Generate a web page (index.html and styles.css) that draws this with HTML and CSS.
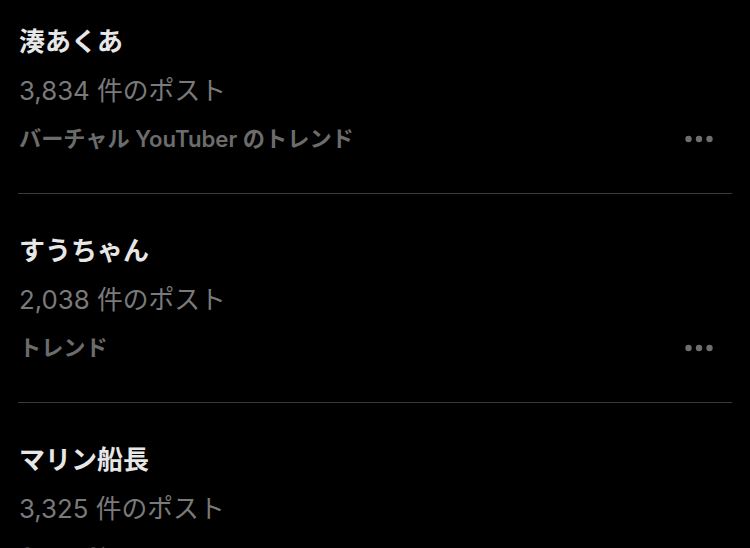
FILE: index.html
```html
<!DOCTYPE html>
<html lang="ja">
<head>
<meta charset="utf-8">
<link rel="stylesheet" href="styles.css">
</head>
<body>
<div class="list">
  <div class="item">
    <div class="title">湊あくあ</div>
    <div class="count">3,834 件のポスト</div>
    <div class="meta">
      <span class="category">バーチャル YouTuber のトレンド</span>
      <svg class="more" width="28" height="8" viewBox="0 0 28 8"><circle cx="3.5" cy="4" r="3.2"/><circle cx="14" cy="4" r="3.2"/><circle cx="24.5" cy="4" r="3.2"/></svg>
    </div>
  </div>
  <div class="item">
    <div class="title">すうちゃん</div>
    <div class="count">2,038 件のポスト</div>
    <div class="meta">
      <span class="category">トレンド</span>
      <svg class="more" width="28" height="8" viewBox="0 0 28 8"><circle cx="3.5" cy="4" r="3.2"/><circle cx="14" cy="4" r="3.2"/><circle cx="24.5" cy="4" r="3.2"/></svg>
    </div>
  </div>
  <div class="item">
    <div class="title">マリン船長</div>
    <div class="count">3,325 件のポスト</div>
    <div class="meta">
      <span class="category">トレンド</span>
      <svg class="more" width="28" height="8" viewBox="0 0 28 8"><circle cx="3.5" cy="4" r="3.2"/><circle cx="14" cy="4" r="3.2"/><circle cx="24.5" cy="4" r="3.2"/></svg>
    </div>
  </div>
</div>
</body>
</html>
```
FILE: styles.css
```css
html, body {
  margin: 0;
  padding: 0;
  background: #000;
  overflow: hidden;
}
body {
  font-family: "Inter", "Noto Sans CJK JP", "Noto Sans", sans-serif;
  width: 750px;
  height: 548px;
}
.list {
  margin-top: -15px;
  display: flex;
  flex-direction: column;
}
.item {
  margin: 0 18px;
  padding: 32px 0 30px 1px;
  border-bottom: 1px solid #3a3a3a;
}
.title {
  font-size: 26px;
  font-weight: 700;
  line-height: 49px;
  color: #e7e7e7;
}
.count {
  font-size: 25.8px;
  font-weight: 400;
  line-height: 49px;
  color: #7a7a7a;
}
.meta {
  display: flex;
  justify-content: space-between;
  align-items: center;
  height: 48px;
  padding-right: 19px;
}
.category {
  font-size: 22.2px;
  font-weight: 600;
  line-height: 48px;
  color: #6c6c6c;
}
.more {
  fill: #6e6e6e;
  display: block;
}
```
